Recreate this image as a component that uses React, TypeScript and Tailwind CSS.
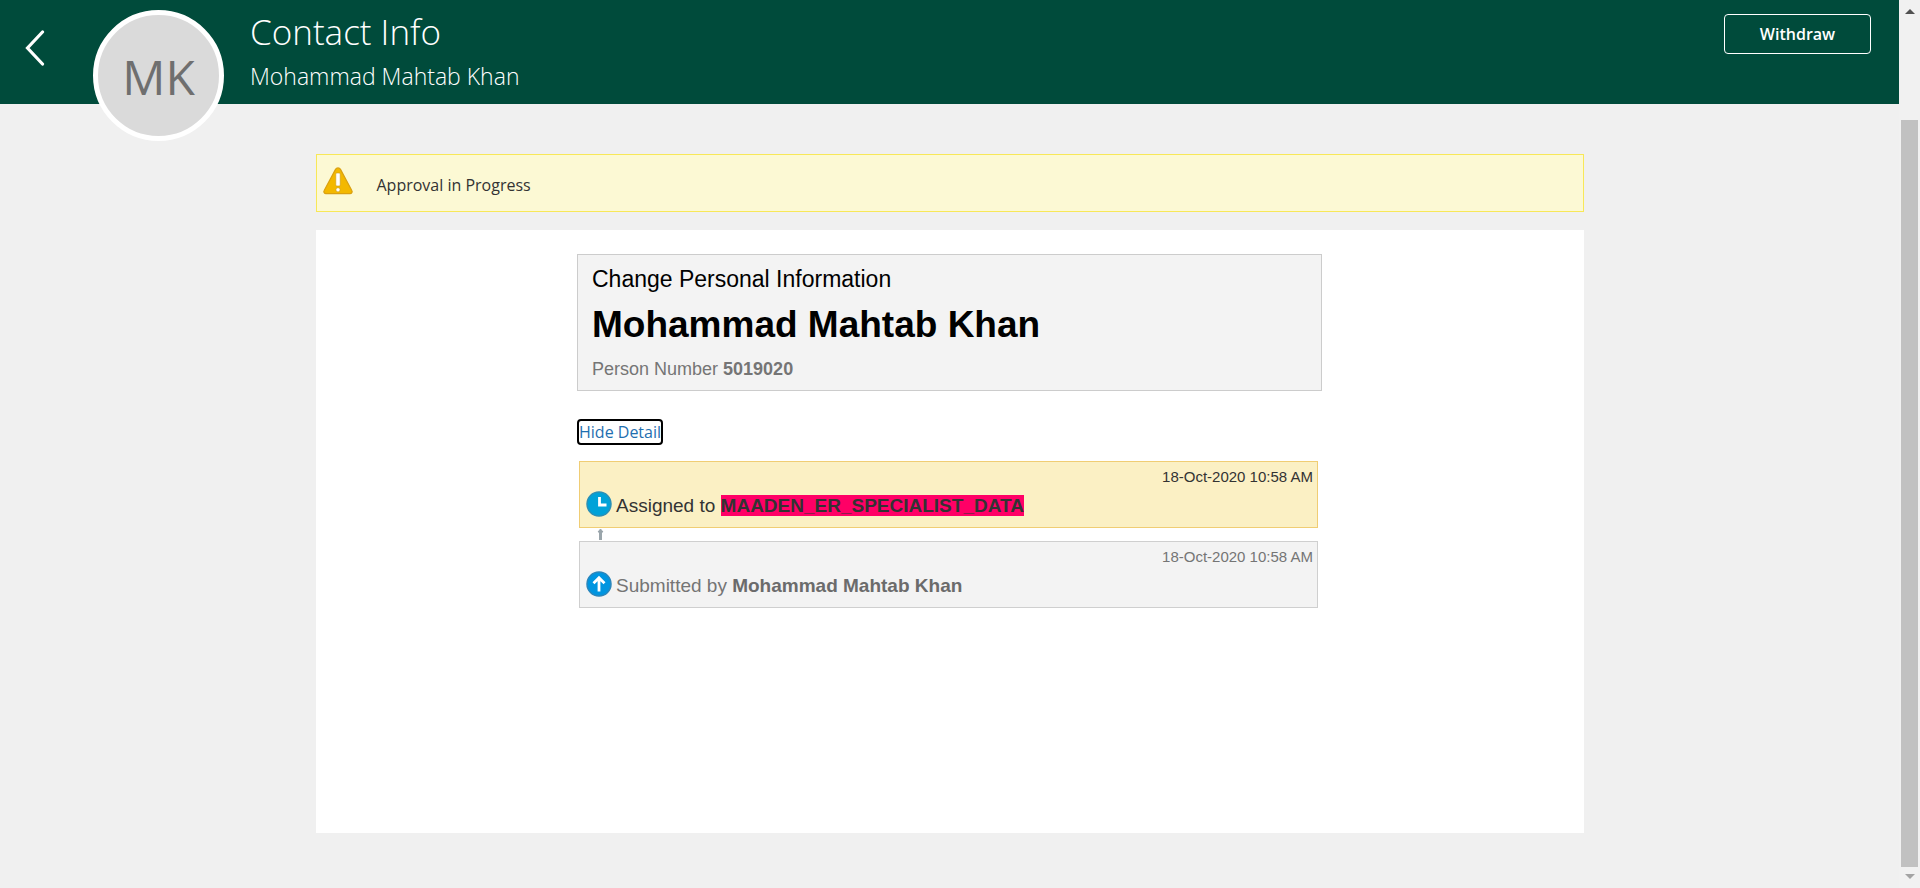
import type { ReactNode } from "react";

type Step = {
  date: string;
  action: string;
  who: string;
  current: boolean;
};

const steps: Step[] = [
  { date: "18-Oct-2020 10:58 AM", action: "Assigned to", who: "MAADEN_ER_SPECIALIST_DATA", current: true },
  { date: "18-Oct-2020 10:58 AM", action: "Submitted by", who: "Mohammad Mahtab Khan", current: false },
];

function ClockIcon() {
  return (
    <svg width="26" height="26" viewBox="0 0 26 26" aria-hidden="true">
      <circle cx="13" cy="13" r="12" fill="#00a2d8" stroke="#2b8fb5" strokeWidth="1.5" />
      <path d="M13.5 6v8h7" fill="none" stroke="#fff" strokeWidth="2.8" />
    </svg>
  );
}

function SubmitIcon() {
  return (
    <svg width="26" height="26" viewBox="0 0 26 26" aria-hidden="true">
      <circle cx="13" cy="13" r="12" fill="#0095e0" stroke="#2b86bb" strokeWidth="1.5" />
      <path d="M13 20.500V7M7.500 12.200 13 6.700l5.500 5.500" fill="none" stroke="#fff" strokeWidth="2.800" />
    </svg>
  );
}

function WarningIcon() {
  return (
    <svg width="30" height="28" viewBox="0 0 30 28" aria-hidden="true">
      <path
        d="M12.500 2.400a2.900 2.900 0 0 1 5 0l11.300 21.100a2.100 2.100 0 0 1-1.900 3.200H3.100a2.100 2.100 0 0 1-1.900-3.200Z"
        fill="#f3b800"
        stroke="#d9a010"
        strokeWidth="1.200"
      />
      <rect x="12.800" y="6" width="4.400" height="13" rx="1" fill="#fff" stroke="#c99a20" strokeWidth=".6" />
      <circle cx="15" cy="22.800" r="2.100" fill="#fff" stroke="#c99a20" strokeWidth=".6" />
    </svg>
  );
}

function StepRow({ step, icon }: { step: Step; icon: ReactNode }) {
  const tone = step.current
    ? "border-[#f0cd74] bg-[#fbf0c4] text-[#333333]"
    : "border-[#cfcfcf] bg-[#f3f3f3] text-[#757575]";
  return (
    <li className={`flex flex-col border pt-1 pr-1 pb-[7px] pl-1.5 ${tone}`}>
      <time className="self-end text-[15px] leading-[22px]">{step.date}</time>
      <div className="flex items-center gap-1">
        {icon}
        <p className="pt-1 text-[19px] leading-7">
          {step.action}{" "}
          <strong className={step.current ? "bg-[#ff0066]" : "text-[#6b6b6b]"}>{step.who}</strong>
        </p>
      </div>
    </li>
  );
}

function Header() {
  return (
    <header className="flex h-26 items-start bg-[#004b3b] pr-7 pl-6 text-white">
      <a href="#back" aria-label="Back" className="mt-7.5 shrink-0">
        <svg width="22" height="36" viewBox="0 0 22 36" aria-hidden="true">
          <path d="M18.500 2 3.500 18l15 16" fill="none" stroke="#fff" strokeWidth="3.200" strokeLinecap="round" />
        </svg>
      </a>
      <div className="mt-2.5 ml-[47px] flex size-[131px] shrink-0 items-center justify-center rounded-full border-5 border-white bg-[#dadada] pt-0.5 text-[48px] leading-none text-[#6f6f6f]">
        MK
      </div>
      <div className="ml-[26px] flex-1">
        <h1 className="pt-2 text-[35px] leading-12 font-light">Contact Info</h1>
        <p className="text-[23px] leading-10 font-light">Mohammad Mahtab Khan</p>
      </div>
      <button type="button" className="mt-3.5 h-10 w-[147px] shrink-0 rounded border border-white text-[16px] font-semibold">
        Withdraw
      </button>
    </header>
  );
}

function ScrollRail() {
  return (
    <div className="flex w-[21px] shrink-0 flex-col items-center bg-[#f1f1f1] pt-2 pb-2" aria-hidden="true">
      <svg width="10" height="6" viewBox="0 0 10 6">
        <path d="M0 6 5 1l5 5Z" fill="#505050" />
      </svg>
      <div className="mt-[106px] mb-[7px] w-[17px] flex-1 bg-[#c1c1c1]" />
      <svg width="10" height="6" viewBox="0 0 10 6">
        <path d="M0 0h10L5 5Z" fill="#a3a3a3" />
      </svg>
    </div>
  );
}

export default function App() {
  return (
    <div className="flex min-h-screen bg-[#f0f0f0] font-['Open_Sans',sans-serif]">
      <div className="flex min-w-0 flex-1 flex-col">
        <Header />
        <main className="mx-auto flex w-full max-w-[1268px] flex-1 flex-col gap-[18px] pt-[50px] pb-[55px]">
          <div role="status" className="flex h-[58px] items-center border border-[#f8e858] bg-[#fcf9d4] pl-1.5 text-[#333333]">
            <div className="pb-1">
              <WarningIcon />
            </div>
            <p className="ml-6 pt-1 text-[16px]">Approval in Progress</p>
          </div>
          <section className="flex-1 bg-white pt-6 pb-6">
            <div className="mx-auto w-full max-w-[745px]">
              <div className="border border-[#cccccc] bg-[#f3f3f3] px-3.5 pt-2 pb-[3px] font-['Liberation_Sans',Arial,sans-serif]">
                <p className="text-[23px] leading-8 text-black">Change Personal Information</p>
                <h2 className="pt-2 text-[37px] leading-11 font-bold text-black">Mohammad Mahtab Khan</h2>
                <p className="pt-1 text-[18px] leading-9 text-[#757575]">
                  Person Number <strong>5019020</strong>
                </p>
              </div>
              <button
                type="button"
                className="mt-7 block h-[26px] rounded border-2 border-black text-[16px] leading-5 text-[#1f6fb0]"
              >
                Hide Detail
              </button>
              <ol className="mt-4 mr-1 ml-0.5 font-['Liberation_Sans',Arial,sans-serif]">
                <StepRow step={steps[0]} icon={<ClockIcon />} />
                <li className="flex h-[13px] items-center pl-[18px]" aria-hidden="true">
                  <svg width="7" height="13" viewBox="0 0 7 13">
                    <path d="M3.500 1 6 4H1Z" fill="#9aa5ab" stroke="#9aa5ab" />
                    <path d="M3.500 3v9" stroke="#9aa5ab" strokeWidth="3" />
                  </svg>
                </li>
                <StepRow step={steps[1]} icon={<SubmitIcon />} />
              </ol>
            </div>
          </section>
        </main>
      </div>
      <ScrollRail />
    </div>
  );
}
